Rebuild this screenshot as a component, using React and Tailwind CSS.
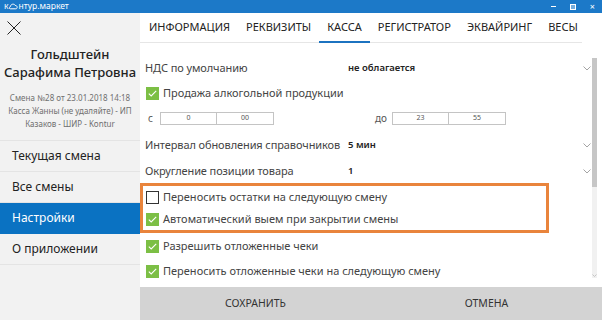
import React from "react";

const font = { fontFamily: '"Noto Sans", "Open Sans", sans-serif' };

function Check({ checked }) {
  if (!checked) {
    return <span className="w-[13px] h-[13px] border border-[#333] bg-white shrink-0" />;
  }
  return (
    <span className="w-[13px] h-[13px] bg-[#7cbf45] flex items-center justify-center shrink-0">
      <svg width="9" height="7" viewBox="0 0 9 7" fill="none">
        <path d="M0.8 3.6 L3.2 5.9 L8.2 0.8" stroke="white" strokeWidth="1.1" />
      </svg>
    </span>
  );
}

function CheckRow({ checked, label, h }) {
  return (
    <div className={`flex items-center gap-[4px] pl-[6px] whitespace-nowrap ${h}`}>
      <Check checked={checked} />
      <span className="text-[11px] text-[#444]">{label}</span>
    </div>
  );
}

function Chevron() {
  return (
    <svg width="8" height="5" viewBox="0 0 8 5" className="shrink-0">
      <path d="M0.5 0.5 L4 4 L7.5 0.5" stroke="#9a9a9a" fill="none" strokeWidth="0.9" />
    </svg>
  );
}

function SelectRow({ label, value, h }) {
  return (
    <div className={`flex items-center pl-[5px] pr-[1px] whitespace-nowrap ${h}`}>
      <span className="w-[203px] text-[11px] tracking-[-0.1px] text-[#444]">{label}</span>
      <span className="flex-1 text-[9.5px] font-semibold text-[#222]">{value}</span>
      <Chevron />
    </div>
  );
}

function TimeBox({ a, b }) {
  return (
    <div className="flex h-[13px] border border-[#c4c4c4] text-[7px] text-[#555]">
      <span className="w-[56px] flex items-center justify-center border-r border-[#c4c4c4]">{a}</span>
      <span className="w-[56px] flex items-center justify-center">{b}</span>
    </div>
  );
}

const tabs = ["ИНФОРМАЦИЯ", "РЕКВИЗИТЫ", "КАССА", "РЕГИСТРАТОР", "ЭКВАЙРИНГ", "ВЕСЫ"];
const menu = ["Текущая смена", "Все смены", "Настройки", "О приложении"];

export default function App() {
  return (
    <div className="w-[602px] h-[320px] flex flex-col overflow-hidden bg-white" style={font}>
      {/* title bar */}
      <div className="h-[13px] bg-[#1c79c8] flex items-center justify-between text-white">
        <div className="pl-[4px] flex items-center text-[8.5px] leading-none">
          <span>к</span>
          <svg width="9" height="7" viewBox="0 0 9 7" className="mx-[0.5px]">
            <path d="M1.2 5.8 C0 5.8 0 3.8 1.4 3.6 C1.6 1 5 0.3 6.2 2.4 C8.6 2.4 8.8 5.8 6.8 5.8 Z" stroke="white" strokeWidth="1" fill="none" />
          </svg>
          <span>нтур.маркет</span>
        </div>
        <div className="flex items-center gap-[14px] pr-[7px] text-[9px] leading-none">
          <span className="w-[5px] h-[1px] bg-white" />
          <span className="w-[6px] h-[6px] border border-white bg-white/40" />
          <span>×</span>
        </div>
      </div>

      <div className="flex flex-1 min-h-0">
        {/* sidebar */}
        <aside className="w-[140px] bg-[#f2f2f2] flex flex-col whitespace-nowrap">
          <div className="h-[21px] pl-[7px] pt-[8px]">
            <svg width="14" height="14" viewBox="0 0 14 14">
              <path d="M0.5 0.5 L13.5 13.5 M13.5 0.5 L0.5 13.5" stroke="#222" strokeWidth="1" />
            </svg>
          </div>
          <div className="mt-[11px] text-center text-[13px] leading-[18px] font-medium text-[#222]">
            <div>Гольдштейн</div>
            <div>Сарафима Петровна</div>
          </div>
          <div className="mt-[10px] text-center text-[8px] leading-[13px] text-[#6f6f6f]">
            <div>Смена №28 от 23.01.2018 14:18</div>
            <div>Касса Жанны (не удаляйте) - ИП</div>
            <div>Казаков - ШИР - Kontur</div>
          </div>
          <div className="mt-[10px] border-t border-[#e4e4e4]">
            {menu.map((m) => (
              <div
                key={m}
                className={`h-[31px] flex items-center pl-[12px] text-[12px] border-b ${
                  m === "Настройки" ? "bg-[#0a72c2] text-white border-[#0a72c2]" : "text-[#222] border-[#e4e4e4]"
                }`}
              >
                {m}
              </div>
            ))}
          </div>
        </aside>

        {/* main */}
        <main className="flex-1 flex flex-col min-w-0">
          <nav className="h-[30px] mr-[20px] flex items-end pl-[1px] border-b border-[#e6e6e6] whitespace-nowrap">
            {tabs.map((t) => (
              <div
                key={t}
                className={`h-full flex items-center px-[8px] text-[11px] text-[#222] border-b-2 -mb-[1px] ${
                  t === "КАССА" ? "border-[#1c73c0]" : "border-transparent"
                }`}
              >
                {t}
              </div>
            ))}
          </nav>

          <div className="flex-1 flex min-h-0">
            <div className="flex-1 pt-[12px]">
              <SelectRow label="НДС по умолчанию" value="не облагается" h="h-[26px]" />
              <CheckRow checked label="Продажа алкогольной продукции" h="h-[24px]" />
              <div className="h-[26px] flex items-center text-[10px] text-[#555]">
                <span className="w-[20px] pl-[8px]">с</span>
                <TimeBox a="0" b="00" />
                <span className="ml-[101px] w-[17px]">до</span>
                <TimeBox a="23" b="55" />
              </div>
              <SelectRow label="Интервал обновления справочников" value="5 мин" h="h-[29px]" />
              <SelectRow label="Округление позиции товара" value="1" h="h-[23px]" />
              <div className="w-[409px] border-[3px] border-[#e9843c]">
                <div className="-ml-[3px]">
                  <CheckRow checked={false} label="Переносить остатки на следующую смену" h="h-[23px]" />
                  <CheckRow checked label="Автоматический выем при закрытии смены" h="h-[21px]" />
                </div>
              </div>
              <CheckRow checked label="Разрешить отложенные чеки" h="h-[26px]" />
              <CheckRow checked label="Переносить отложенные чеки на следующую смену" h="h-[24px]" />
            </div>
            <div className="w-[5px] mr-[5px] mt-[15px] mb-[9px] flex flex-col">
              <div className="h-[129px] bg-[#c6c6c6]" />
              <div className="flex-1 bg-[#f1f1f1] flex items-end justify-center pb-[1px]">
                <svg width="5" height="3" viewBox="0 0 5 3">
                  <path d="M0.5 0.5 L2.5 2.5 L4.5 0.5" stroke="#bbb" fill="none" strokeWidth="0.8" />
                </svg>
              </div>
            </div>
          </div>

          <footer className="h-[33px] bg-[#d3d3d3] flex text-[10.5px] text-[#333]">
            <div className="flex-1 flex items-center justify-center">СОХРАНИТЬ</div>
            <div className="flex-1 flex items-center justify-center">ОТМЕНА</div>
          </footer>
        </main>
      </div>
    </div>
  );
}
